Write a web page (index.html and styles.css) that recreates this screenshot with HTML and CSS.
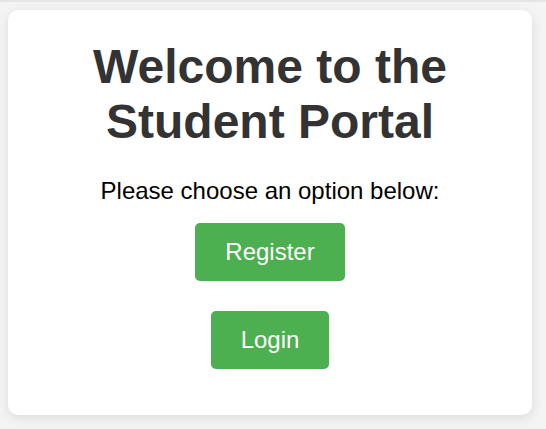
FILE: index.html
```html
<!DOCTYPE html>
<html lang="en">
<head>
<meta charset="utf-8">
<title>Student Portal</title>
<link rel="stylesheet" href="styles.css">
</head>
<body>
  <main class="card">
    <h1 class="title">Welcome to the Student Portal</h1>
    <p class="subtitle">Please choose an option below:</p>
    <div class="actions">
      <a class="btn" href="#">Register</a>
      <a class="btn" href="#">Login</a>
    </div>
  </main>
</body>
</html>
```

FILE: styles.css
```css
html, body {
  margin: 0;
  padding: 0;
}
html {
  border-top: 2px solid #e6e6e6;
  background: #f4f4f4;
}
body {
  background: #f4f4f4;
  font-family: "Liberation Sans", Arial, sans-serif;
  padding: 8px 14px 15px 8px;
}
.card {
  background: #ffffff;
  border-radius: 10px;
  box-shadow: 0 3px 12px rgba(0, 0, 0, 0.1);
  padding: 29px 20px 46px;
  text-align: center;
}
.title {
  margin: 0 auto;
  max-width: 380px;
  font-size: 48px;
  font-weight: bold;
  color: #333333;
}
.subtitle {
  margin: 28px 0 18px;
  font-size: 24px;
  color: #000000;
}
.actions {
  display: flex;
  flex-direction: column;
  align-items: center;
  gap: 30px;
}
.btn {
  display: inline-block;
  background: #4caf50;
  color: #ffffff;
  font-size: 24px;
  padding: 15px 30px;
  border-radius: 5px;
  text-decoration: none;
}
```
